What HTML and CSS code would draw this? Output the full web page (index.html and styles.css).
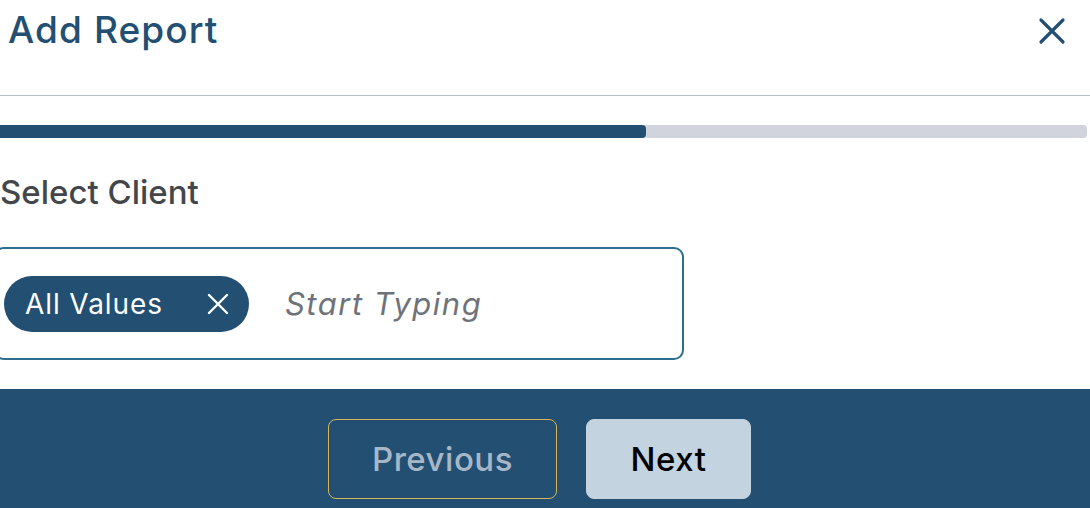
FILE: index.html
```html
<!DOCTYPE html>
<html lang="en">
<head>
<meta charset="utf-8">
<title>Add Report</title>
<link rel="stylesheet" href="styles.css">
</head>
<body>
<div class="modal">
  <header class="head">
    <h1 class="title">Add Report</h1>
    <button class="close" aria-label="Close">
      <svg width="28" height="28" viewBox="0 0 28 28"><path d="M3 3 L25 25 M25 3 L3 25" stroke="#224f72" stroke-width="3.2" stroke-linecap="round"/></svg>
    </button>
  </header>
  <div class="content">
    <div class="progress"><div class="fill" style="width:59.4%"></div></div>
    <div class="label">Select Client</div>
    <div class="field">
      <span class="chip">All Values
        <svg width="22" height="22" viewBox="0 0 22 22"><path d="M2 2 L20 20 M20 2 L2 20" stroke="#ffffff" stroke-width="2.4" stroke-linecap="round"/></svg>
      </span>
      <span class="placeholder">Start Typing</span>
    </div>
  </div>
  <footer class="foot">
    <button class="btn prev">Previous</button>
    <button class="btn next">Next</button>
  </footer>
</div>
</body>
</html>
```
FILE: styles.css
```css
* { box-sizing: border-box; }
html, body { margin: 0; padding: 0; background: #fff; overflow: hidden; }
body { font-family: Inter, "Open Sans", sans-serif; }
.modal { width: 1090px; height: 508px; overflow: hidden; }
.head {
  height: 96px;
  border-bottom: 1px solid #b8c0c8;
  display: flex;
  align-items: flex-start;
  justify-content: space-between;
  padding: 0 24px 0 8px;
}
.title {
  margin: 10px 0 0;
  font-size: 37px;
  font-weight: 500;
  color: #224f72;
  letter-spacing: 1.1px;
  line-height: 40px;
}
.close {
  margin-top: 17px;
  border: 0;
  background: none;
  padding: 0;
  width: 28px;
  height: 28px;
}
.close svg { display: block; }
.content { margin-left: -6px; padding-top: 29px; }
.progress {
  margin-left: 6px;
  width: 1087px;
  height: 13px;
  background: #d1d4dc;
  border-radius: 0 4px 4px 0;
  overflow: hidden;
}
.fill { height: 100%; background: #224f72; border-radius: 0 4px 4px 0; }
.label {
  margin-top: 36px;
  font-size: 33px;
  font-weight: 500;
  color: #43474c;
  line-height: 36px;
  padding-left: 6px;
  letter-spacing: 0;
}
.field {
  margin-top: 37px;
  width: 690px;
  height: 113px;
  border: 2px solid #2e6e8e;
  border-radius: 10px;
  display: flex;
  align-items: center;
  padding-left: 8px;
}
.chip {
  display: inline-flex;
  align-items: center;
  height: 56px;
  width: 245px;
  padding: 0 20px 0 21px;
  background: #224f72;
  border-radius: 28px;
  color: #fff;
  font-size: 28px;
  font-weight: 400;
  letter-spacing: 0.9px;
  justify-content: space-between;
}
.chip svg { display: block; }
.placeholder {
  margin-left: 36px;
  font-size: 31px;
  font-style: italic;
  color: #6e7279;
  letter-spacing: 1.5px;
}
.foot {
  margin-top: 29px;
  height: 119px;
  background: #224f72;
  display: flex;
  justify-content: center;
  align-items: flex-start;
  gap: 29px;
  padding: 30px 11px 0 0;
}
.btn {
  height: 80px;
  border-radius: 8px;
  font-family: Inter, "Open Sans", sans-serif;
  font-size: 33px;
  font-weight: 500;
  letter-spacing: 0.5px;
}
.prev {
  width: 229px;
  background: transparent;
  border: 1px solid #d8b45a;
  color: #a7b7c8;
}
.next {
  width: 165px;
  background: #c3d3e0;
  border: 1px solid #c3d3e0;
  color: #000;
}
```
